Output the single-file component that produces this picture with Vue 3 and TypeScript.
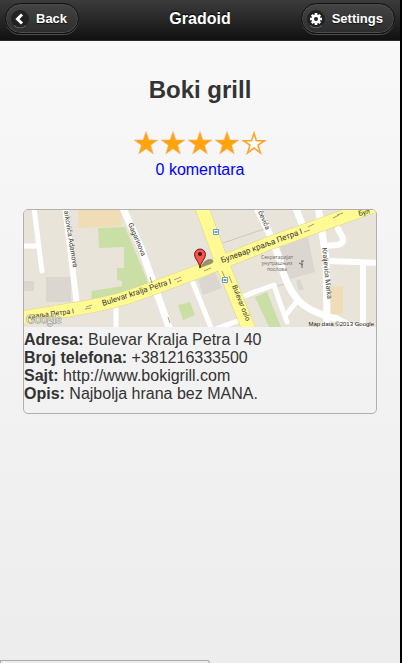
<script setup lang="ts">
interface Detail {
  label: string
  value: string
}

const rating = 4
const stars: boolean[] = Array.from({ length: 5 }, (_, i) => i < rating)

const details: Detail[] = [
  { label: 'Adresa:', value: 'Bulevar Kralja Petra I 40' },
  { label: 'Broj telefona:', value: '+381216333500' },
  { label: 'Sajt:', value: 'http://www.bokigrill.com' },
  { label: 'Opis:', value: 'Najbolja hrana bez MANA.' },
]
</script>

<template>
  <div class="page">
    <header class="bar">
      <button type="button" class="btn">
        <svg class="icon" viewBox="0 0 18 18" aria-hidden="true">
          <circle cx="9" cy="9" r="9" fill="#222" />
          <path d="M3 15.5A9 9 0 0 0 15 15.5" fill="none" stroke="#777" stroke-width="0.8" />
          <path d="M11 4.5L6.5 9L11 13.5" fill="none" stroke="#fff" stroke-width="3" />
        </svg>
        <span>Back</span>
      </button>
      <h1 class="title">Gradoid</h1>
      <button type="button" class="btn">
        <svg class="icon" viewBox="0 0 18 18" aria-hidden="true">
          <circle cx="9" cy="9" r="9" fill="#222" />
          <path d="M3 15.5A9 9 0 0 0 15 15.5" fill="none" stroke="#777" stroke-width="0.8" />
          <g stroke="#fff" stroke-width="2.6">
            <path d="M9 3V15M3 9H15M4.8 4.8L13.2 13.2M13.2 4.8L4.8 13.2" />
          </g>
          <circle cx="9" cy="9" r="4.5" fill="#fff" />
          <circle cx="9" cy="9" r="2" fill="#222" />
        </svg>
        <span>Settings</span>
      </button>
    </header>

    <main class="content">
      <h2 class="name">Boki grill</h2>
      <div class="stars" role="img" aria-label="4 / 5">
        <svg v-for="(full, i) in stars" :key="i" class="star" viewBox="0 0 24 24">
          <path
            v-if="full"
            d="M12 0.5L14.9 9H23.8L16.7 14.3L19.3 23L12 17.8L4.7 23L7.3 14.3L0.2 9H9.1Z"
            fill="#ffa40a"
            stroke="#ffb07a"
            stroke-width="0.6"
          />
          <path
            v-else
            d="M12 2.2L14.4 9.7H22.6L16 14.2L18.4 21.8L12 17L5.6 21.8L8 14.2L1.4 9.7H9.6Z"
            fill="#fff"
            stroke="#ffa32b"
            stroke-width="1.6"
          />
        </svg>
      </div>
      <a class="comments" href="#komentari">0 komentara</a>

      <section class="card">
        <svg class="map" viewBox="0 0 352 117" role="img" aria-label="Bulevar kralja Petra I">
          <rect width="352" height="117" fill="#e9e4da" />

          <!-- parks and buildings -->
          <path d="M54 0H98L97 16L54 18Z" fill="#f0dcb5" />
          <path d="M307 76H319V104H307Z" fill="#f0dcb5" />
          <g fill="#c9dfa5">
            <path d="M74 18L101 17L123 70V78L67 90L68 81L98 76V71L93 70V58H100V37L75 38Z" />
            <path d="M154 95L166 92L171 105L159 110Z" />
            <path d="M231 87L243 82L257 117H245Z" />
          </g>
          <g fill="#dcd6d0">
            <path d="M22 67H47V92H22Z" />
            <path d="M0 71H10V81H0Z" />
            <path d="M174 70L191 62L198 78L179 85Z" />
            <path d="M256 37L284 27L291 62L263 70Z" />
            <path d="M272 71L276 69L280 79L275 81Z" />
          </g>
          <path d="M199 33L246 17M251 77L263 73" fill="none" stroke="#cbc6bb" />

          <!-- side streets -->
          <g fill="none" stroke="#fff" stroke-linecap="round" stroke-linejoin="round">
            <path d="M10 -2L18 61M0 36H13" stroke-width="5" />
            <path d="M41 -4L53 96" stroke-width="6" />
            <path d="M98 -4L117 38L146 120" stroke-width="7" />
            <path d="M92 98V120" stroke-width="5" />
            <path d="M167 68L188 120M194 118L222 108" stroke-width="5" />
            <path d="M218 87L236 80L250 75L256 93L263 112M261 106L274 90" stroke-width="5" />
            <path
              d="M232 -4L246 25L256 50Q261 75 274 90Q285 102 313 109L330 118"
              stroke-width="7"
            />
            <path d="M271 -4L278 14" stroke-width="7" />
            <path d="M294 -4L302 48L303 118" stroke-width="7" />
            <path d="M300 36L313 35Q320 34 319 28L314 19" stroke-width="6" />
            <path d="M304 51L356 53M339 53V120" stroke-width="6" />
          </g>

          <!-- boulevards -->
          <g fill="none" stroke-linejoin="round">
            <path
              d="M-4 108L45 100Q90 93 116 83L176 61L246 33L352 -5M177 -5L198 53L226 122"
              stroke="#dcd58a"
              stroke-width="14"
            />
            <path
              d="M-4 108L45 100Q90 93 116 83L176 61L246 33L352 -5M177 -5L198 53L226 122"
              stroke="#fffa94"
              stroke-width="13"
            />
          </g>

          <!-- direction arrows -->
          <g fill="none" stroke="#8b8768" stroke-width="0.8">
            <path d="M62 97L68 95M61 99L67 98M150 70L157 67M153 72L158 70M180 61L187 58" />
            <path d="M284 17L290 14M280 22L286 20M309 8L315 5M313 5L319 3" />
            <path d="M198 61L201 68M205 66L208 73M126 67L128 73M144 107L146 113" />
          </g>
          <g>
            <path
              d="M189.5 19.5H194.5V24.5H189.5ZM198.5 67.5H203.5V72.5H198.5Z"
              fill="#fff"
              stroke="#6d9bc8"
            />
            <path d="M190.5 22H193.5M199.5 70H202.5" stroke="#3f7cb8" stroke-width="1.5" />
          </g>
          <path d="M275 53L279 55M277 51L280 51M278 51V58" stroke="#666" fill="none" />

          <!-- street names -->
          <g class="street">
            <text transform="translate(40 1) rotate(81)">arkovića Adamova</text>
            <text transform="translate(104 14) rotate(67)">Gagarinova</text>
            <text transform="translate(4 109) rotate(-7)">краља Петра I</text>
            <text class="wide" transform="translate(79 96) rotate(-18)">Bulevar kralja Petra I</text>
            <text class="wide" transform="translate(198 53) rotate(-20)">Булевар краља Петра I</text>
            <text transform="translate(335 6) rotate(-14)">Бул</text>
            <text transform="translate(208 76) rotate(68)">Bulevar oslo</text>
            <text transform="translate(234 2) rotate(66)">čevića</text>
            <text transform="translate(298 38) rotate(84)">Kraljevića Marka</text>
          </g>
          <g class="place">
            <text x="253" y="49">Секретаријат</text>
            <text x="253" y="55">унутрашњих</text>
            <text x="253" y="61">послова</text>
          </g>

          <!-- marker -->
          <path d="M176 58Q180 49 187 49Q192 51 187 54Q181 56 176 58Z" fill="#444" opacity="0.55" />
          <path
            d="M176 58C175.5 52 170.5 49 170.5 44.5A5.5 5.5 0 0 1 181.5 44.5C181.5 49 176.5 52 176 58Z"
            fill="#f5554a"
            stroke="#561512"
            stroke-width="0.9"
          />
          <circle cx="176" cy="44" r="2" fill="#4c0f0c" />

          <text class="logo" x="2" y="113">Google</text>
          <text class="copy" x="350" y="116">Map data ©2013 Google</text>
        </svg>
        <div class="details">
          <p v-for="d in details" :key="d.label"><strong>{{ d.label }}</strong> {{ d.value }}</p>
        </div>
      </section>
    </main>
    <div class="status"></div>
  </div>
</template>

<style>
body {
  background: #eee;
}
</style>

<style scoped>
.page {
  position: relative;
  box-sizing: border-box;
  min-height: 100vh;
  overflow: hidden;
  border-right: 2px solid #000;
  background: linear-gradient(#f9f9f9, #ededed);
  color: #333;
  font: 16px/18px "Liberation Sans", Arial, sans-serif;
}
.bar {
  display: grid;
  grid-template-columns: 1fr auto 1fr;
  align-items: start;
  box-sizing: border-box;
  height: 41px;
  padding: 3px 5px 0;
  border-bottom: 1px solid #2a2a2a;
  background: linear-gradient(#3c3c3c, #111);
  color: #fff;
}
.btn {
  display: flex;
  align-items: center;
  gap: 7px;
  justify-self: start;
  height: 31px;
  padding: 0 11px 0 5px;
  border: 1px solid #111;
  border-radius: 16px;
  background: linear-gradient(#444, #2d2d2d);
  box-shadow: inset 0 0 0 1px #4c4c4c, 0 1px 0 #4c4c4c;
  color: #fff;
  font: bold 13px/16px "Liberation Sans", Arial, sans-serif;
  text-shadow: 0 1px 1px #111;
}
.btn:last-child {
  justify-self: end;
}
.icon {
  width: 18px;
  height: 18px;
}
.title {
  margin: 0;
  padding-top: 6px;
  font-size: 16px;
  line-height: 20px;
  text-shadow: 0 -1px 1px #000;
}
.content {
  display: flex;
  flex-direction: column;
  align-items: center;
  padding: 34px 23px 0;
}
.name {
  margin: 0;
  font-size: 24px;
  line-height: 30px;
}
.stars {
  display: flex;
  gap: 3px;
  margin-top: 26px;
}
.star {
  width: 24px;
  height: 24px;
}
.comments {
  margin-top: 6px;
  color: #00f;
  text-decoration: none;
}
.card {
  align-self: stretch;
  box-sizing: border-box;
  margin-top: 30px;
  overflow: hidden;
  border: 1px solid #b3b0ac;
  border-radius: 5px;
}
.map {
  display: block;
  width: 100%;
  height: auto;
}
.details {
  padding: 4px 0 10px;
}
.details p {
  margin: 0;
}
.street {
  fill: #3a3730;
  font: 7px Roboto, sans-serif;
}
.wide {
  font-size: 8px;
}
.place {
  fill: #77736b;
  font: 5px "Noto Sans", sans-serif;
  text-anchor: middle;
}
.logo {
  fill: #eee;
  stroke: #888;
  stroke-width: 1px;
  paint-order: stroke;
  font: 12px "Liberation Serif", serif;
}
.copy {
  fill: #222;
  font: 6px "Liberation Sans", sans-serif;
  text-anchor: end;
}
.status {
  position: absolute;
  bottom: 0;
  left: 0;
  box-sizing: border-box;
  width: 210px;
  height: 3px;
  border: 1px solid #aaa;
  border-bottom: 0;
  border-radius: 0 3px 0 0;
  background: #eee;
}
</style>
